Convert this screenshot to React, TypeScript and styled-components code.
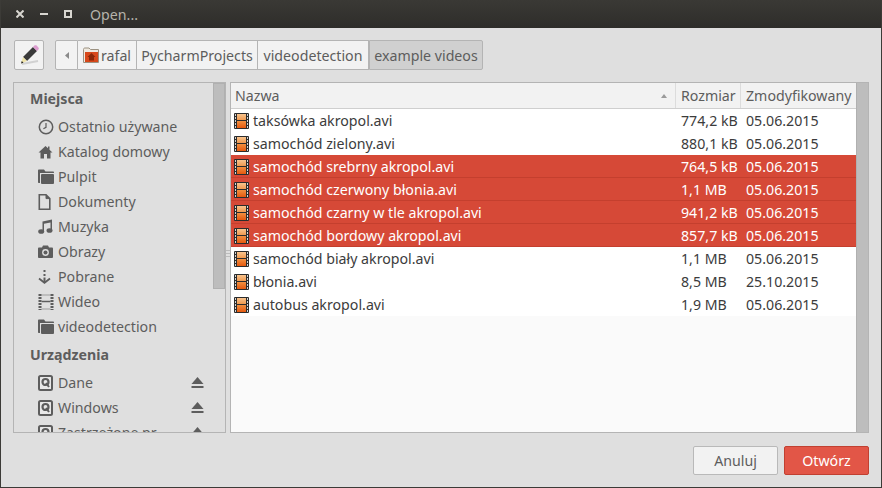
import React from 'react'
import styled, { createGlobalStyle } from 'styled-components'

const GlobalStyle = createGlobalStyle`
	html, body {
		margin: 0;
		padding: 0;
		background: #dfdfdf;
	}
	* {
		box-sizing: border-box;
	}
`

const Window = styled.div`
	width: 882px;
	height: 488px;
	display: flex;
	flex-direction: column;
	overflow: hidden;
	background: #dfdfdf;
	border-left: 1px solid #3c3b37;
	border-right: 1px solid #3c3b37;
	border-bottom: 1px solid #3c3b37;
	font-family: 'Noto Sans', 'Open Sans', sans-serif;
	font-size: 14.2px;
	color: #3c3c3c;
`
const TitleBar = styled.div`
	height: 28px;
	flex: none;
	display: flex;
	align-items: center;
	margin: 0 -1px;
	padding-left: 16px;
	background: linear-gradient(#3a3935, #2e2d2a);
	color: #b6b3ab;
`
const WinButton = styled.span`
	width: 24px;
	height: 28px;
	display: flex;
	align-items: center;
`
const Title = styled.span`
	margin-left: 2px;
`
const Body = styled.div`
	flex: 1;
	display: flex;
	flex-direction: column;
	padding: 12px;
	min-height: 0;
`
const Toolbar = styled.div`
	display: flex;
	height: 30px;
	flex: none;
	margin-left: 1px;
`
const EditButton = styled.div`
	width: 30px;
	height: 30px;
	display: flex;
	align-items: center;
	justify-content: center;
	background: #f2f2f2;
	border: 1px solid #b4b4b4;
	border-radius: 2px;
`
const PathBar = styled.div`
	display: flex;
	margin-left: 11px;
	height: 30px;
`
const Crumb = styled.div<{ $active?: boolean; $first?: boolean; $w: number }>`
	width: ${(p) => p.$w}px;
	display: flex;
	align-items: center;
	justify-content: center;
	height: 30px;
	color: #5d5d5d;
	white-space: nowrap;
	background: ${(p) => (p.$active ? '#d0d0d0' : '#f2f2f2')};
	border: 1px solid #b4b4b4;
	border-width: ${(p) => (p.$active ? '1px' : '1px 1px 1px 0')};
	border-radius: ${(p) => (p.$active ? '0 2px 2px 0' : '0')};
	${(p) => p.$first && 'border-left-width: 1px; border-radius: 2px 0 0 2px;'}
`
const Panes = styled.div`
	flex: 1;
	display: flex;
	margin-top: 12px;
	min-height: 0;
`
const Sidebar = styled.div`
	width: 213px;
	flex: none;
	display: flex;
	overflow: hidden;
	border: 1px solid #b4b4b4;
`
const SidebarList = styled.div`
	flex: 1;
	min-width: 0;
	overflow: hidden;
`
const SectionTitle = styled.div`
	height: 30px;
	margin-top: 1px;
	padding: 0 0 2px 16px;
	display: flex;
	align-items: center;
	font-weight: 700;
	color: #5d5d5d;
`
const Place = styled.div`
	height: 25px;
	display: flex;
	align-items: center;
	padding-left: 24px;
	padding-right: 9px;
	color: #5d5d5d;
	white-space: nowrap;
`
const PlaceIcon = styled.span`
	width: 20px;
	flex: none;
	display: flex;
	align-items: center;
`
const Eject = styled.span`
	margin-left: auto;
	display: flex;
`
const ScrollTrack = styled.div`
	width: 12px;
	flex: none;
	background: #dfdfdf;
`
const SidebarThumb = styled.div`
	height: 206px;
	background: #bdbdbd;
	border: 1px solid #b0b0b0;
`
const Grip = styled.div`
	width: 4px;
	flex: none;
	display: flex;
	flex-direction: column;
	justify-content: center;
	gap: 2px;
	padding-bottom: 8px;
`
const GripLine = styled.i`
	display: block;
	height: 1px;
	background: #bcbcbc;
`
const FileList = styled.div`
	flex: 1;
	min-width: 0;
	display: flex;
	background: #fff;
	border: 1px solid #b4b4b4;
	overflow: hidden;
`
const FileColumn = styled.div`
	flex: 1;
	min-width: 0;
	background: #fafafa;
`
const HeaderRow = styled.div`
	height: 26px;
	display: flex;
	background: #f2f2f2;
	border-bottom: 1px solid #cfcfcf;
	color: #5d5d5d;
`
const HeaderCell = styled.div<{ $w?: number }>`
	${(p) => (p.$w ? `width: ${p.$w}px; flex: none;` : 'flex: 1;')}
	display: flex;
	align-items: center;
	padding-left: 4px;
	justify-content: space-between;
	white-space: nowrap;
	border-right: 1px solid #dcdcdc;
	&:last-child {
		border-right: 0;
	}
	&:not(:first-child) {
		padding-left: 5px;
	}
`
const SortArrow = styled.i`
	display: block;
	margin-right: 8px;
	margin-top: 1px;
	border-left: 3px solid transparent;
	border-right: 3px solid transparent;
	border-bottom: 4px solid #9a9a9a;
`
const Row = styled.div<{ $selected?: boolean }>`
	height: 23px;
	display: flex;
	align-items: center;
	background: ${(p) => (p.$selected ? '#d64937' : '#fff')};
	color: ${(p) => (p.$selected ? '#fff' : '#3c3c3c')};
	box-shadow: ${(p) => (p.$selected ? 'inset 0 -1px 0 #c43f2e' : 'none')};
`
const NameCell = styled.div`
	flex: 1;
	min-width: 0;
	display: flex;
	align-items: center;
	padding-left: 3px;
	gap: 4px;
	white-space: nowrap;
`
const SizeCell = styled.div`
	width: 65px;
	flex: none;
	padding-left: 5px;
	white-space: nowrap;
`
const DateCell = styled.div`
	width: 115px;
	flex: none;
	padding-left: 5px;
	white-space: nowrap;
`
const ListScroll = styled.div`
	width: 12px;
	flex: none;
	background: #bdbdbd;
	border-left: 1px solid #b0b0b0;
`
const Footer = styled.div`
	flex: none;
	display: flex;
	justify-content: flex-end;
	gap: 6px;
	margin-top: 13px;
`
const Button = styled.div<{ $primary?: boolean }>`
	width: 85px;
	height: 29px;
	display: flex;
	align-items: center;
	justify-content: center;
	border-radius: 2px;
	background: ${(p) => (p.$primary ? '#e25647' : '#f2f2f2')};
	border: 1px solid ${(p) => (p.$primary ? '#c14031' : '#b9b9b9')};
	color: ${(p) => (p.$primary ? '#fff' : '#5d5d5d')};
`

const G = '#5d5d5d'

const FilmIcon = () => (
	<svg width="15" height="16" viewBox="0 0 15 16">
		<defs>
			<linearGradient id="paneTop" x1="0" y1="0" x2="0" y2="1">
				<stop offset="0" stopColor="#f8c48e" />
				<stop offset="1" stopColor="#f09a50" />
			</linearGradient>
			<linearGradient id="paneBottom" x1="0" y1="0" x2="0" y2="1">
				<stop offset="0" stopColor="#f29040" />
				<stop offset="1" stopColor="#e5590f" />
			</linearGradient>
		</defs>
		<rect width="15" height="16" rx="1" fill="#2c2c2c" />
		{[1, 4, 7, 10, 13].map((y) => (
			<g key={y} fill="#d4d4d4">
				<rect x="1" y={y} width="1" height="2" />
				<rect x="13" y={y} width="1" height="2" />
			</g>
		))}
		<rect x="3" y="1" width="9" height="6" fill="url(#paneTop)" />
		<rect x="3" y="8" width="9" height="7" fill="url(#paneBottom)" />
	</svg>
)
const ClockIcon = () => (
	<svg width="16" height="16" viewBox="0 0 16 16" fill="none" stroke={G}>
		<circle cx="8" cy="8" r="6.7" strokeWidth="1.5" />
		<path d="M8 4v4.3l-2.6 1.4" strokeWidth="1.2" />
	</svg>
)
const HomeIcon = () => (
	<svg width="15" height="14" viewBox="0 0 15 14" fill={G}>
		<path d="M7.5 1L0.5 7.5H2.5V13.5H6V9H9V13.5H12.5V7.5H14.5L11.5 4.7V1.5H10V3.3Z" />
	</svg>
)
const FolderIcon = () => (
	<svg width="16" height="15" viewBox="0 0 16 15" fill={G}>
		<path d="M0 1.5C0 1 .4 .5 1 .5H6L7.5 2.5H15C15.6 2.5 16 3 16 3.5V4H2V14H1C.4 14 0 13.6 0 13Z" />
		<rect x="3" y="5" width="13" height="10" rx="1" />
	</svg>
)
const DocIcon = () => (
	<svg width="13" height="16" viewBox="0 0 13 16" fill="none" stroke={G} strokeWidth="1.6">
		<path d="M1.3 .8H8L11.8 4.6V15.2H1.3Z" />
		<path d="M8 .8V4.6H11.8" fill={G} strokeWidth="1" />
	</svg>
)
const MusicIcon = () => (
	<svg width="15" height="15" viewBox="0 0 15 15" fill={G}>
		<path d="M4.5 2.5L14 .5V11.5H12.5V3.5L6 4.8V13H4.5Z" />
		<ellipse cx="3.2" cy="12.5" rx="3" ry="2.3" />
		<ellipse cx="11.5" cy="11.5" rx="3" ry="2.3" />
	</svg>
)
const CameraIcon = () => (
	<svg width="15" height="13" viewBox="0 0 15 13">
		<path d="M1 2.5H4L5 .5H10L11 2.5H14C14.5 2.5 15 3 15 3.5V12C15 12.5 14.5 13 14 13H1C.5 13 0 12.5 0 12V3.5C0 3 .5 2.5 1 2.5Z" fill={G} />
		<circle cx="7.5" cy="7.5" r="3.4" fill="#dfdfdf" />
		<circle cx="7.5" cy="7.5" r="2" fill={G} />
	</svg>
)
const DownloadIcon = () => (
	<svg width="13" height="14" viewBox="0 0 13 14" fill="none" stroke={G} strokeWidth="2">
		<path d="M6.5 0V2M6.5 4V6M6.5 7.5V12" />
		<path d="M1 8.5L6.5 12.8L12 8.5" strokeWidth="1.8" />
	</svg>
)
const VideoIcon = () => (
	<svg width="16" height="16" viewBox="0 0 16 16" fill="none" stroke={G}>
		<path d="M2 0V16M14 0V16" strokeDasharray="2 1" strokeWidth="3" />
		<path d="M3.5 1H12.5M3.5 15H12.5" strokeWidth="1" opacity="0.5" />
		<path d="M3.5 7.5H12.5" strokeWidth="1.5" />
	</svg>
)
const DiskIcon = () => (
	<svg width="15" height="16" viewBox="0 0 15 16" fill="none" stroke={G}>
		<rect x="1" y="1" width="13" height="14" rx="1.5" fill="#e8e8e8" strokeWidth="2" />
		<circle cx="7.5" cy="7" r="3" strokeWidth="2.2" />
		<path d="M8 8L11 12" strokeWidth="2" />
	</svg>
)
const EjectIcon = () => (
	<svg width="13" height="12" viewBox="0 0 13 12" fill={G}>
		<path d="M6.5 0L12.5 7H.5Z" />
		<rect x="0.5" y="9" width="12" height="2" />
	</svg>
)
const PencilIcon = () => (
	<svg width="22" height="22" viewBox="0 0 22 22">
		<path d="M4 20L20 17" stroke="#c4c4c4" strokeWidth="2" opacity="0.7" />
		<path d="M5 13L15 3L19 7L9 17Z" fill="#3a3a3a" />
		<path d="M5 13L3 19.5L9 17Z" fill="#efe3a8" />
		<path d="M3 19.5L3.8 17L5.5 18.7Z" fill="#222" />
		<path d="M15 3L16.4 1.6C17 1 18 1 18.6 1.6L20.4 3.4C21 4 21 5 20.4 5.6L19 7Z" fill="#dc9ccf" />
	</svg>
)
const HomeFolderIcon = () => (
	<svg width="16" height="16" viewBox="0 0 16 16" style={{ marginRight: 2 }}>
		<path d="M.5 2.5C.5 1.5 1 1 2 1H6L7.5 2.5H15.5V15.5H.5Z" fill="#efe9df" stroke="#9b9181" />
		<rect x="2" y="5" width="13" height="10" fill="#d8481a" />
		<path d="M8.5 6L4.5 10H6V13.5H11V10H12.5Z" fill="#8a2708" />
	</svg>
)
const CloseIcon = () => (
	<svg width="8" height="8" viewBox="0 0 8 8" stroke="#d8d6d0" strokeWidth="2">
		<path d="M.5 .5L7.5 7.5M7.5 .5L.5 7.5" />
	</svg>
)
const MinIcon = () => (
	<svg width="8" height="8" viewBox="0 0 8 8">
		<rect y="3" width="8" height="2" fill="#d8d6d0" />
	</svg>
)
const MaxIcon = () => (
	<svg width="8" height="8" viewBox="0 0 8 8" fill="none" stroke="#d8d6d0" strokeWidth="2">
		<rect x="1" y="1" width="6" height="6" />
	</svg>
)

const places: [React.ReactNode, string][] = [
	[<ClockIcon />, 'Ostatnio używane'],
	[<HomeIcon />, 'Katalog domowy'],
	[<FolderIcon />, 'Pulpit'],
	[<DocIcon />, 'Dokumenty'],
	[<MusicIcon />, 'Muzyka'],
	[<CameraIcon />, 'Obrazy'],
	[<DownloadIcon />, 'Pobrane'],
	[<VideoIcon />, 'Wideo'],
	[<FolderIcon />, 'videodetection'],
]
const devices = ['Dane', 'Windows', 'Zastrzeżone pr']

const files = [
	{ name: 'taksówka akropol.avi', size: '774,2 kB', date: '05.06.2015' },
	{ name: 'samochód zielony.avi', size: '880,1 kB', date: '05.06.2015' },
	{ name: 'samochód srebrny akropol.avi', size: '764,5 kB', date: '05.06.2015', selected: true },
	{ name: 'samochód czerwony błonia.avi', size: '1,1 MB', date: '05.06.2015', selected: true },
	{ name: 'samochód czarny w tle akropol.avi', size: '941,2 kB', date: '05.06.2015', selected: true },
	{ name: 'samochód bordowy akropol.avi', size: '857,7 kB', date: '05.06.2015', selected: true },
	{ name: 'samochód biały akropol.avi', size: '1,1 MB', date: '05.06.2015' },
	{ name: 'błonia.avi', size: '8,5 MB', date: '25.10.2015' },
	{ name: 'autobus akropol.avi', size: '1,9 MB', date: '05.06.2015' },
]

const App = () => (
	<>
		<GlobalStyle />
		<Window>
			<TitleBar>
				<WinButton><CloseIcon /></WinButton>
				<WinButton><MinIcon /></WinButton>
				<WinButton><MaxIcon /></WinButton>
				<Title>Open...</Title>
			</TitleBar>
			<Body>
				<Toolbar>
					<EditButton><PencilIcon /></EditButton>
					<PathBar>
						<Crumb $first $w={23}>
							<svg width="4" height="7" viewBox="0 0 4 7"><path d="M4 0V7L0 3.5Z" fill="#8a8a8a" /></svg>
						</Crumb>
						<Crumb $w={59}><HomeFolderIcon />rafal</Crumb>
						<Crumb $w={121}>PycharmProjects</Crumb>
						<Crumb $w={111}>videodetection</Crumb>
						<Crumb $active $w={114}>example videos</Crumb>
					</PathBar>
				</Toolbar>
				<Panes>
					<Sidebar>
						<SidebarList>
							<SectionTitle>Miejsca</SectionTitle>
							{places.map(([icon, label]) => (
								<Place key={label}><PlaceIcon>{icon}</PlaceIcon>{label}</Place>
							))}
							<SectionTitle>Urządzenia</SectionTitle>
							{devices.map((label) => (
								<Place key={label}>
									<PlaceIcon><DiskIcon /></PlaceIcon>
									{label}
									<Eject><EjectIcon /></Eject>
								</Place>
							))}
						</SidebarList>
						<ScrollTrack><SidebarThumb /></ScrollTrack>
					</Sidebar>
					<Grip><GripLine /><GripLine /><GripLine /></Grip>
					<FileList>
						<FileColumn>
							<HeaderRow>
								<HeaderCell>Nazwa<SortArrow /></HeaderCell>
								<HeaderCell $w={65}>Rozmiar</HeaderCell>
								<HeaderCell $w={115}>Zmodyfikowany</HeaderCell>
							</HeaderRow>
							{files.map((f) => (
								<Row key={f.name} $selected={f.selected}>
									<NameCell><FilmIcon />{f.name}</NameCell>
									<SizeCell>{f.size}</SizeCell>
									<DateCell>{f.date}</DateCell>
								</Row>
							))}
						</FileColumn>
						<ListScroll />
					</FileList>
				</Panes>
				<Footer>
					<Button>Anuluj</Button>
					<Button $primary>Otwórz</Button>
				</Footer>
			</Body>
		</Window>
	</>
)

export default App
